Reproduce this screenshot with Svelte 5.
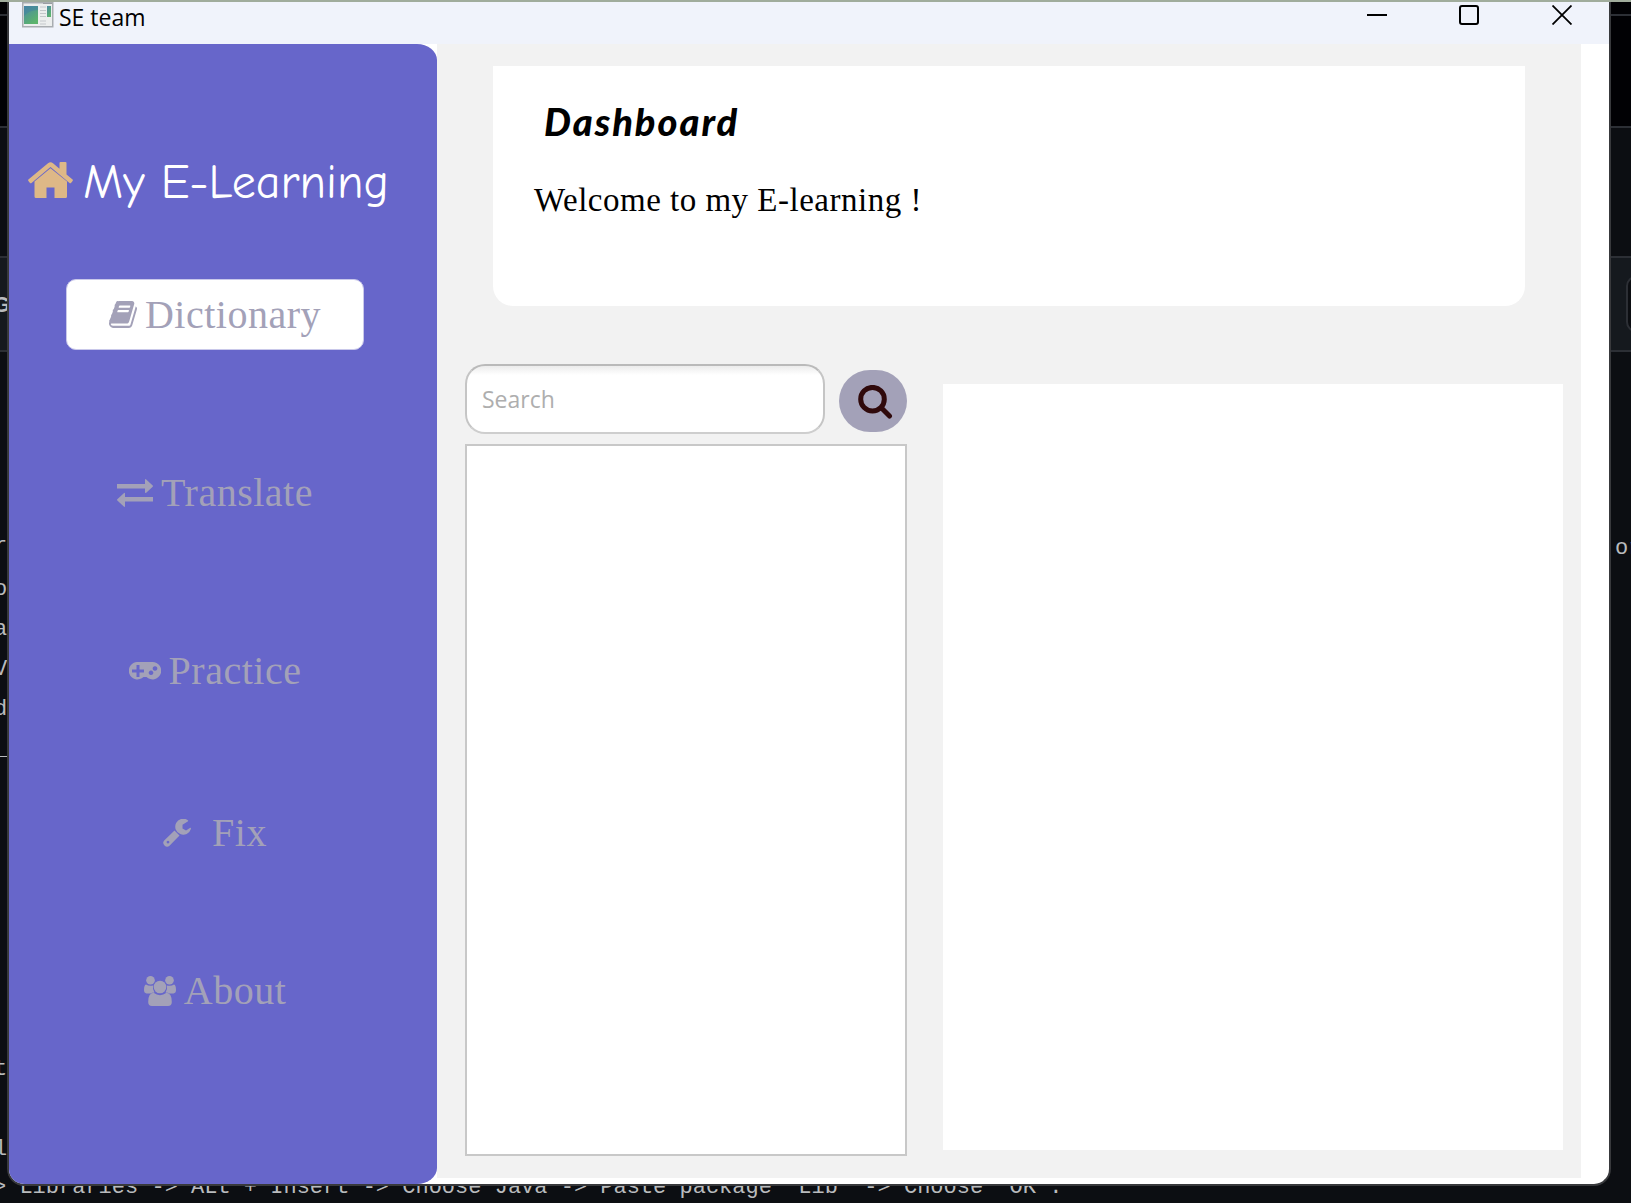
<script>
  const edgeLeft = [
    { text: 'G', y: 305, bold: true },
    { text: 'r', y: 547 },
    { text: 'op', y: 590 },
    { text: 'a', y: 630 },
    { text: 'Ve', y: 670 },
    { text: 'd:', y: 710 },
    { text: '_|', y: 750 },
    { text: 'tc', y: 1070 },
    { text: 'l:', y: 1150 }
  ];

  const nav = [
    { id: 'dictionary', label: 'Dictionary', active: true },
    { id: 'translate', label: 'Translate' },
    { id: 'practice', label: 'Practice' },
    { id: 'fix', label: 'Fix' },
    { id: 'about', label: 'About' }
  ];
</script>

<div class="desktop">
  <div class="strip s1"></div>
  <div class="strip s2"></div>
  <div class="strip s3"></div>
  <div class="strip s4"></div>
  <i class="pill"></i>
  {#each edgeLeft as t}
    <span class="code" class:bold={t.bold} style="top:{t.y - 15}px">{t.text}</span>
  {/each}
  <span class="code right">or</span>
  <span class="code bottom">&gt; Libraries -&gt; ALt + Insert -&gt; Choose Java -&gt; Paste package "Lib" -&gt; Choose "OK".</span>

  <div class="window">
    <header>
      <svg class="app-icon" width="32" height="26" viewBox="0 0 32 26">
        <defs>
          <linearGradient id="scr" x1="0" y1="0" x2="0.6" y2="1">
            <stop offset="0" stop-color="#4a88a4" /><stop offset="1" stop-color="#5cb46c" />
          </linearGradient>
        </defs>
        <rect x="0.75" y="0.75" width="30" height="24" fill="#eceeee" stroke="#a9adb1" stroke-width="1.5" />
        <rect x="2" y="4" width="14" height="18" fill="url(#scr)" />
        <path d="M2 14Q7 8 16 8V4H2z" fill="#3f7fa4" opacity=".5" />
        <path d="M18 5h6M18 8.500h6M18 11.500h6M18 14.500h6M18 19h6M18 22h6" stroke="#c4c8cb" stroke-width="1.200" />
        <rect x="25" y="4" width="4" height="11" fill="url(#scr)" />
        <path d="M21 1.500h9" stroke="#9a9ea2" />
      </svg>
      <span class="title">SE team</span>
      <div class="controls">
        <svg width="20" height="20" viewBox="0 0 20 20"><path d="M0 10h20" /></svg>
        <svg width="20" height="20" viewBox="0 0 20 20"><rect x="1" y="1" width="18" height="18" rx="2" /></svg>
        <svg width="20" height="20" viewBox="0 0 20 20"><path class="thin" d="M.5.5l19 19M19.500.5l-19 19" /></svg>
      </div>
    </header>

    <div class="body">
      <aside>
        <div class="brand">
          <svg width="45" height="36" viewBox="0 0 45 36">
            <path fill="#deb887" d="M22.500 6.200L6.500 19.500V34.500Q6.500 36 8 36H18.500V25.500H26.500V36H37.500Q39 36 39 34.500V19.500ZM.4 17.600L20 1.200Q22.500-.9 25 1.200L31.500 6.700V1Q31.500 0 32.500 0H37.500Q38.500 0 38.500 1V12.500L44.600 17.600Q45.200 18.300 44.600 19L43 20.900Q42.300 21.400 41.500 20.900L22.500 5L3.500 20.900Q2.700 21.400 2 20.900L.4 19Q-.2 18.300 .4 17.600Z" />
          </svg>
          <span>My E-Learning</span>
        </div>
        <nav>
          {#each nav as item}
            <button class={item.id} class:active={item.active}>
              {#if item.id === 'dictionary'}
                <svg width="28" height="27" viewBox="0 0 1664 1536" preserveAspectRatio="none"><path d="M1639 350q40 57 18 129l-275 906q-19 64-76.500 107.500T1183 1536H260q-77 0-148.500-53.500T12 1351q-24-67-2-127 0-4 3-27t4-37q1-8-3-21.500t-3-19.500q2-11 8-21t16.500-23.500T52 1051q23-38 45-91.500t30-91.500q3-10 .5-30t-.5-28q3-11 17-28t17-23q21-36 42-92t25-90q1-9-2.500-32t.5-28q4-13 22-30.500t22-22.500q19-26 42.500-84.500T340 283q1-8-3-25.500t-2-26.500q2-8 9-18t18-23 17-21q8-12 16.500-30.500t15-35 16-36 19.500-32T469.500 12t36-11.500T553 6l-1 3q38-9 51-9h761q74 0 114 56t18 130L1221 1091q-36 119-71.500 153.500T1021 1279H152q-27 0-38 15-11 16-1 43 24 70 144 70h923q29 0 56-15.500t35-41.500l300-987q7-22 5-57 38 15 59 43zM575 352q-4 13 2 22.500t20 9.500h608q13 0 25.500-9.500T1247 352l21-64q4-13-2-22.500t-20-9.500H638q-13 0-25.500 9.500T596 288zm-83 256q-4 13 2 22.500t20 9.500h608q13 0 25.500-9.500T1164 608l21-64q4-13-2-22.500t-20-9.500H555q-13 0-25.500 9.500T513 544z" /></svg>
              {:else if item.id === 'translate'}
                <svg width="36" height="28" viewBox="0 0 36 28"><path d="M0 5h28V1q0-1.500 1.200-.5l6.500 6q.6.600 0 1.200l-6.500 6Q28 14.500 28 13V9.500H0zM36 18v4.500H8V27q0 1.500-1.200.5l-6.500-6q-.6-.7 0-1.300l6.500-6Q8 13 8 14.500V18z" /></svg>
              {:else if item.id === 'practice'}
                <svg width="32" height="18" viewBox="0 0 32 18"><path fill-rule="evenodd" d="M9 0H23.500A8.700 8.700 0 1 1 17.500 15H14.500A8.700 8.700 0 1 1 9 0ZM7.500 3V7.500H3V10.500H7.500V15H10.500V10.500H15V7.500H10.500V3ZM22 8.500a2.300 2.300 0 1 0 .01 0ZM26 4.200a2.300 2.300 0 1 0 .01 0Z" /></svg>
              {:else if item.id === 'fix'}
                <svg width="28" height="28" viewBox="0 0 28 28"><path fill-rule="evenodd" d="M11.500 11.500L16.500 16.500L6.500 26.700Q4 28.800 1.500 26.500Q-1 24 1.200 21.500ZM5 21.700a1.400 1.400 0 1 0 .01 0ZM24.500.9Q25.800 1.700 24.700 2.600L19.500 5.700V9.500L23 11.500L27.300 8.700Q28.200 8.600 27.900 10A8 8 0 1 1 24.500.9Z" /></svg>
              {:else}
                <svg width="32" height="30" viewBox="0 0 32 30"><circle cx="6.500" cy="4.300" r="4.300" /><circle cx="25.500" cy="4.300" r="4.300" /><circle cx="16" cy="11" r="6.300" /><path d="M2 8.500Q5 10.500 9 9.500Q8.300 13.500 10.500 16.500Q8 16.500 6.500 17.500H2.500Q0 17 0 14Q0 9 2 8.500ZM30 8.500Q27 10.500 23 9.500Q23.700 13.500 21.500 16.500Q24 16.500 25.500 17.500H29.500Q32 17 32 14Q32 9 30 8.500ZM9.500 16.800Q16 21.500 22.500 16.800Q27.800 17 27.800 26Q27.800 30 24 30H8Q4.200 30 4.200 26Q4.200 17 9.500 16.800Z" /></svg>
              {/if}
              <span>{item.label}</span>
            </button>
          {/each}
        </nav>
      </aside>

      <main>
        <section class="card">
          <h1>Dashboard</h1>
          <p>Welcome to my E-learning !</p>
        </section>
        <div class="content">
          <div class="lookup">
            <div class="search-row">
              <input type="text" placeholder="Search" />
              <button class="go" aria-label="Search">
                <svg width="35" height="34" viewBox="0 0 35 34"><circle cx="14.500" cy="14.200" r="11.800" /><path d="M23.500 23l8 8" /></svg>
              </button>
            </div>
            <div class="list"></div>
          </div>
          <div class="result"></div>
        </div>
      </main>
    </div>
  </div>
</div>

<style>
  :global(body) { margin: 0; overflow: hidden; }
  * { box-sizing: border-box; }
  .desktop { position: relative; width: 1631px; height: 1203px; overflow: hidden; background: #0c0e12; border-top: 2px solid #a0ac9c; }
  .strip { border-bottom: 2px solid #2c2f35; }
  .s1 { height: 14px; background: #010104; }
  .s2 { height: 112px; background: #010104; }
  .s3 { height: 130px; }
  .s4 { height: 94px; background: #15191e; }
  .pill { position: absolute; left: 1626px; top: 274px; width: 60px; height: 56px; border: 2px solid #2c2f35; border-radius: 10px; background: #0c0e12; }
  .code { position: absolute; left: -6px; font: 22px/26px "Liberation Mono", monospace; color: #b9bbbd; white-space: pre; }
  .code.bold { left: -7px; font: bold 22px/26px "Liberation Sans", sans-serif; }
  .code.right { left: 1615px; top: 534px; }
  .code.bottom { left: -7px; top: 1173px; }
  .window { position: absolute; left: 7px; top: -2px; width: 1604px; height: 1186px; border: 2px solid #38393c; border-top: 0; border-radius: 0 0 17px 17px; background: #fff; overflow: hidden; display: flex; flex-direction: column; }
  header { flex: none; height: 44px; background: #f0f3fb; display: flex; align-items: flex-start; padding: 2px 37px 0 13px; }
  .title { margin-left: 5px; font: 23px/30px "Open Sans", sans-serif; color: #000; }
  .controls { margin: 3px 0 0 auto; display: flex; gap: 72px; }
  .controls svg { fill: none; stroke: #000; stroke-width: 2; }
  .controls svg:last-child { margin-left: 1px; }
  .controls .thin { stroke-width: 1.8; }
  .body { flex: 1; display: flex; min-height: 0; }
  aside { width: 428px; flex: none; background: #6766ca; border-radius: 0 20px 20px 0 / 0 16px 16px 0; padding-top: 107px; }
  .brand { height: 64px; display: flex; align-items: center; padding-left: 19px; gap: 10px; color: #fff; font: 48px/64px "Comic Sans MS", "Comic Neue", "Open Sans", sans-serif; white-space: nowrap; }
  .brand svg { position: relative; top: -3px; }
  nav { display: flex; flex-direction: column; align-items: flex-start; padding: 64px 0 0 57px; }
  nav button { width: 298px; height: 71px; display: flex; align-items: center; justify-content: center; gap: 8px; padding: 0; border: 1px solid transparent; border-radius: 10px; background: none; color: #a3a1b8; font: 40px/48px "Liberation Serif", serif; letter-spacing: .5px; }
  nav button svg { fill: currentColor; flex: none; }
  nav .active { background: #fff; border-color: #c9c8ea; }
  .translate, .practice { margin-top: 107px; }
  .fix { margin-top: 91px; gap: 21px; }
  .about { margin-top: 87px; }
  main { width: 1144px; height: 1134px; background: #f2f2f2; padding: 22px 18px 0 28px; }
  .card { width: 1032px; height: 240px; margin-left: 28px; padding: 30px 0 0 41px; border-radius: 0 0 20px 20px; background: #fff; }
  h1 { margin: 0 0 0 10px; font: italic 900 38px/50px Lato, sans-serif; letter-spacing: 2px; color: #000; }
  p { margin: 34px 0 0; font: 33px/40px "Liberation Serif", serif; color: #000; letter-spacing: .5px; }
  .content { display: flex; justify-content: space-between; margin-top: 58px; }
  .search-row { display: flex; align-items: center; gap: 14px; }
  input { width: 360px; height: 70px; border: 2px solid; border-color: #bababa #c5c5c5 #cecece; border-radius: 20px; padding: 0 15px; background: linear-gradient(#ececec, #fff 9px); font: 23px "Open Sans", sans-serif; outline: 0; }
  input::placeholder { color: #aeaeae; opacity: 1; }
  .go { width: 68px; height: 62px; margin-top: 4px; padding: 1px 0 0 5px; border: 0; border-radius: 31px; background: #a3a1b8; display: flex; align-items: center; justify-content: center; }
  .go svg { fill: none; stroke: #300a0c; stroke-width: 5; stroke-linecap: round; }
  .list { width: 442px; height: 712px; margin-top: 10px; border: 2px solid #c8c8c8; background: #fff; }
  .result { width: 620px; height: 766px; margin-top: 20px; background: #fff; }
</style>
